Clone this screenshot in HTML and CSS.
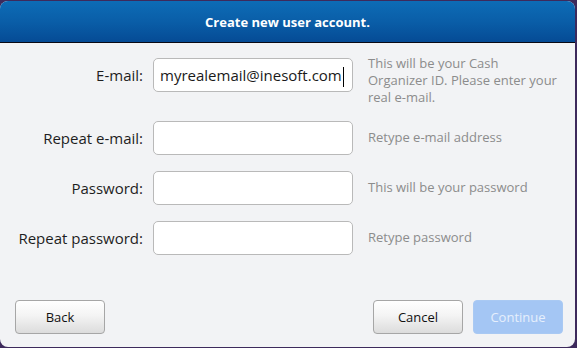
FILE: index.html
```html
<!DOCTYPE html>
<html lang="en">

<head>
  <meta charset="UTF-8">
  <meta name="viewport" content="width=device-width, initial-scale=1.0">
  <title>Create new user account</title>
  <link rel="stylesheet" href="styles.css">
</head>

<body>
  <div class="window">
    <div class="window-header">Create new user account.</div>

    <div class="window-body">
      <div class="form-grid">
        <label class="field-label">E-mail:</label>
        <div class="field">myrealemail@inesoft.com<span class="caret"></span></div>
        <div class="hint hint-multi">This will be your Cash<br>Organizer ID. Please enter your<br>real e-mail.</div>

        <label class="field-label">Repeat e-mail:</label>
        <div class="field"></div>
        <div class="hint">Retype e-mail address</div>

        <label class="field-label">Password:</label>
        <div class="field"></div>
        <div class="hint">This will be your password</div>

        <label class="field-label">Repeat password:</label>
        <div class="field"></div>
        <div class="hint">Retype password</div>
      </div>

      <div class="button-bar">
        <button class="btn">Back</button>
        <div class="spacer"></div>
        <button class="btn">Cancel</button>
        <button class="btn btn-disabled">Continue</button>
      </div>
    </div>
  </div>
</body>

</html>
```

FILE: styles.css
```css
html,
body {
  height: 100%;
}

body {
  margin: 0;
  background: #3d2a5c;
  font-family: "Open Sans", "Noto Sans", sans-serif;
  display: flex;
}

.window {
  flex: 1;
  margin: 1px 2px 1px 0;
  background: #f2f3f5;
  border-radius: 8px;
  overflow: hidden;
  display: flex;
  flex-direction: column;
}

.window-header {
  height: 41px;
  flex-shrink: 0;
  background: linear-gradient(180deg, #0d6cb6 0%, #0a5ea8 50%, #054b95 100%);
  border-bottom: 1px solid #0a0a14;
  color: #fff;
  font-size: 13px;
  font-weight: bold;
  display: flex;
  justify-content: center;
  align-items: center;
}

.window-body {
  flex: 1;
  display: flex;
  flex-direction: column;
  padding: 15px 12px 13px 15px;
}

.form-grid {
  display: grid;
  grid-template-columns: 128px 200px 1fr;
  grid-template-rows: 47px 34px 34px 34px;
  row-gap: 16px;
  column-gap: 10px;
}

.field-label {
  align-self: start;
  height: 34px;
  line-height: 34px;
  text-align: right;
  font-size: 15px;
  color: #1e1e1e;
  white-space: nowrap;
}

.field {
  align-self: start;
  box-sizing: border-box;
  height: 34px;
  border: 1px solid #b9b9b9;
  border-radius: 5px;
  background: #fff;
  padding: 0 6px;
  line-height: 32px;
  font-size: 15px;
  color: #1a1a1a;
  white-space: nowrap;
}

.caret {
  display: inline-block;
  width: 1px;
  height: 20px;
  background: #000;
  vertical-align: middle;
  margin-left: 1px;
}

.hint {
  align-self: start;
  margin-left: 5px;
  padding-top: 8px;
  font-size: 13px;
  line-height: 17px;
  color: #8c8c8c;
  white-space: nowrap;
}

.hint-multi {
  padding-top: 0;
  margin-top: -3px;
}

.button-bar {
  margin-top: auto;
  display: flex;
  gap: 10px;
}

.spacer {
  flex: 1;
}

.btn {
  width: 90px;
  height: 34px;
  border: 1px solid #a6a6a6;
  border-radius: 4px;
  background: linear-gradient(180deg, #ffffff 0%, #f4f4f4 45%, #dcdcdc 100%);
  font-family: inherit;
  font-size: 13px;
  color: #111;
}

.btn-disabled {
  border-color: #a9c9f3;
  background: #a4c6f4;
  color: #e6effc;
}
```
